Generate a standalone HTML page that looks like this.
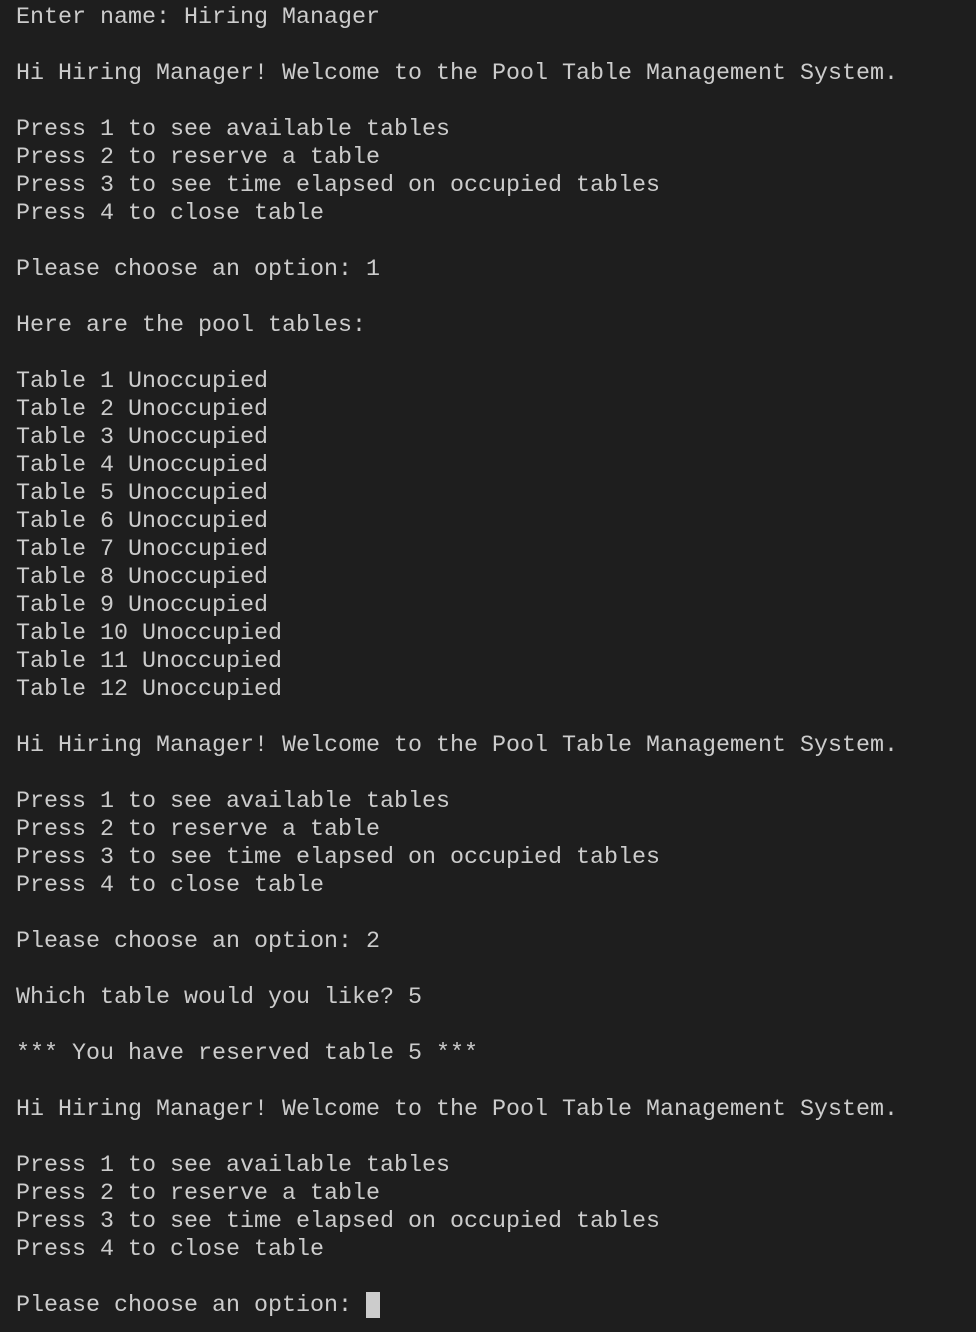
<!DOCTYPE html>
<html><head><meta charset="utf-8"><style>
html,body{margin:0;padding:0;background:#1e1e1e;width:976px;height:1332px;overflow:hidden}
pre{margin:0;position:absolute;left:16px;top:4px;font-family:"Liberation Mono","DejaVu Sans Mono",monospace;font-size:23.33px;line-height:28px;color:#cccccc}
.cur{display:inline-block;width:14px;height:26px;background:#cccccc;vertical-align:-7px}
</style></head><body><pre>Enter name: Hiring Manager

Hi Hiring Manager! Welcome to the Pool Table Management System.

Press 1 to see available tables
Press 2 to reserve a table
Press 3 to see time elapsed on occupied tables
Press 4 to close table

Please choose an option: 1

Here are the pool tables:

Table 1 Unoccupied
Table 2 Unoccupied
Table 3 Unoccupied
Table 4 Unoccupied
Table 5 Unoccupied
Table 6 Unoccupied
Table 7 Unoccupied
Table 8 Unoccupied
Table 9 Unoccupied
Table 10 Unoccupied
Table 11 Unoccupied
Table 12 Unoccupied

Hi Hiring Manager! Welcome to the Pool Table Management System.

Press 1 to see available tables
Press 2 to reserve a table
Press 3 to see time elapsed on occupied tables
Press 4 to close table

Please choose an option: 2

Which table would you like? 5

*** You have reserved table 5 ***

Hi Hiring Manager! Welcome to the Pool Table Management System.

Press 1 to see available tables
Press 2 to reserve a table
Press 3 to see time elapsed on occupied tables
Press 4 to close table

Please choose an option: <span class="cur"></span></pre></body></html>
